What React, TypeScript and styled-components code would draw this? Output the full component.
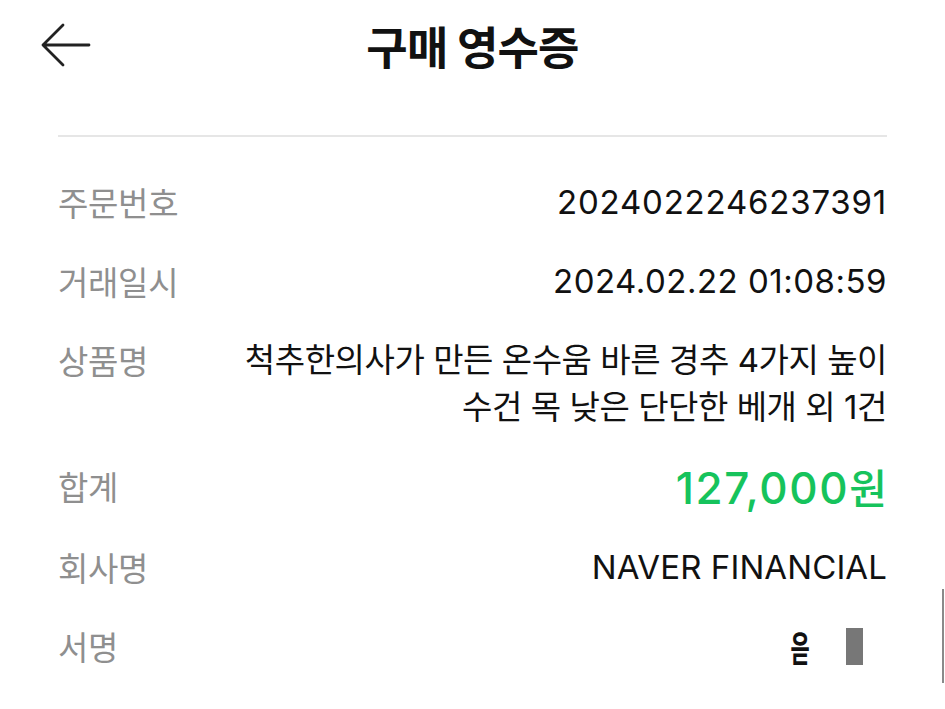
import React from "react";
import styled, { createGlobalStyle } from "styled-components";

const GlobalStyle = createGlobalStyle`
  body {
    margin: 0;
    background: #ffffff;
    font-family: "Noto Sans CJK KR", "Liberation Sans", sans-serif;
    color: #111111;
  }
`;

const Page = styled.div`
  min-height: 100vh;
  background: #ffffff;
`;

const Header = styled.header`
  display: grid;
  grid-template-columns: 1fr auto 1fr;
  align-items: center;
  height: 90px;
  padding: 0 41px;
`;

const BackButton = styled.button`
  justify-self: start;
  display: flex;
  padding: 0;
  border: none;
  background: none;
  cursor: pointer;
`;

const Title = styled.h1`
  margin: 0;
  font-family: "Noto Sans CJK KR", sans-serif;
  font-size: 45px;
  font-weight: 700;
  letter-spacing: -0.8px;
  color: #111111;
`;

const Content = styled.main`
  padding: 0 58px;
`;

const Divider = styled.div`
  height: 2px;
  margin-top: 45px;
  background: #e6e6e6;
`;

const List = styled.dl`
  display: flex;
  flex-direction: column;
  gap: 32px;
  margin: 0;
  padding-top: 42px;
`;

const Row = styled.div`
  display: flex;
  justify-content: space-between;
  align-items: flex-start;
  gap: 40px;
`;

const Label = styled.dt`
  flex-shrink: 0;
  font-family: "Noto Sans CJK KR", sans-serif;
  font-size: 33px;
  line-height: 47px;
  letter-spacing: -0.3px;
  color: #8f8f8f;
`;

const Value = styled.dd<{ $size?: number; $tracking?: number; $green?: boolean }>`
  margin: 0;
  text-align: right;
  font-family: Inter, "Noto Sans CJK KR", sans-serif;
  font-size: ${(p) => p.$size ?? 33}px;
  font-weight: ${(p) => (p.$green ? 500 : 400)};
  line-height: 47px;
  letter-spacing: ${(p) => p.$tracking ?? 0}px;
  color: ${(p) => (p.$green ? "#16c35c" : "#111111")};
`;

const Won = styled.span`
  font-family: "Noto Sans CJK KR", sans-serif;
  font-size: 41px;
  letter-spacing: 0;
`;

const Signature = styled.dd`
  display: flex;
  align-items: center;
  gap: 30px;
  margin: 0 24px 0 0;
  height: 47px;
`;

const SignMark = styled.span`
  display: inline-block;
  font-family: "Noto Sans CJK KR", sans-serif;
  font-size: 35px;
  font-weight: 600;
  transform: scaleX(0.6);
  color: #111111;
`;

const SignBar = styled.span`
  width: 17px;
  height: 37px;
  background: #777777;
`;

const ScrollIndicator = styled.div`
  position: fixed;
  right: 1px;
  top: 589px;
  width: 2px;
  height: 94px;
  background: #8a8a8a;
`;

const BackArrow = () => (
  <svg width="50" height="44" viewBox="0 0 50 44" fill="none">
    <path
      d="M22 2 L2 22 L22 42 M2 22 H48"
      stroke="#222222"
      strokeWidth="2.8"
      strokeLinecap="round"
      strokeLinejoin="round"
    />
  </svg>
);

export default function App() {
  return (
    <Page>
      <GlobalStyle />
      <Header>
        <BackButton aria-label="뒤로">
          <BackArrow />
        </BackButton>
        <Title>구매 영수증</Title>
      </Header>
      <Content>
        <Divider />
        <List>
          <Row>
            <Label>주문번호</Label>
            <Value $tracking={0.8}>2024022246237391</Value>
          </Row>
          <Row>
            <Label>거래일시</Label>
            <Value $tracking={0.5}>2024.02.22 01:08:59</Value>
          </Row>
          <Row>
            <Label>상품명</Label>
            <Value $tracking={-0.45}>
              척추한의사가 만든 온수움 바른 경추 4가지 높이
              <br />
              수건 목 낮은 단단한 베개 외 1건
            </Value>
          </Row>
          <Row>
            <Label>합계</Label>
            <Value $size={44} $tracking={1.6} $green>
              127,000<Won>원</Won>
            </Value>
          </Row>
          <Row>
            <Label>회사명</Label>
            <Value $tracking={0.1}>NAVER FINANCIAL</Value>
          </Row>
          <Row>
            <Label>서명</Label>
            <Signature>
              <SignMark>읃</SignMark>
              <SignBar />
            </Signature>
          </Row>
        </List>
      </Content>
      <ScrollIndicator />
    </Page>
  );
}
